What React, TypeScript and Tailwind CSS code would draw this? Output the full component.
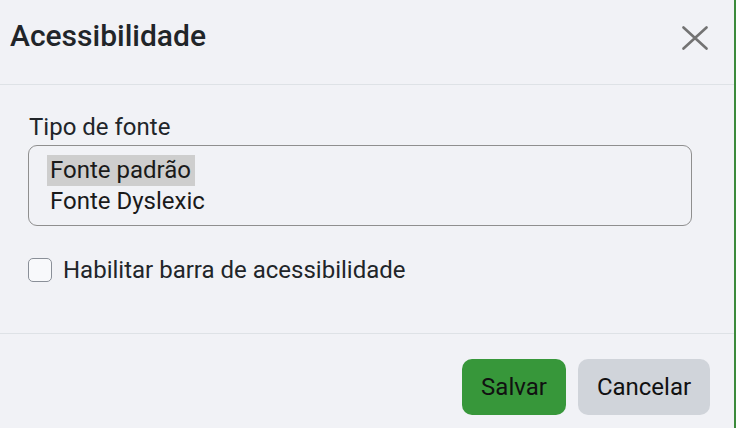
import React from "react";

export default function App() {
  return (
    <div
      className="flex w-[736px] h-[428px] bg-[#f1f2f6] text-[#212529] overflow-hidden"
      style={{ fontFamily: "Roboto, 'Noto Sans', sans-serif" }}
    >
      <div className="flex-1 flex flex-col">
        <div className="h-[85px] border-b border-[#dee2e6] flex items-start justify-between pl-[10px] pr-[26px] pt-[18px]">
          <h1 className="text-[30px] leading-[36px] font-medium text-[#212529]">Acessibilidade</h1>
          <button className="mt-[8px] w-[26px] h-[24px] flex items-center justify-center">
            <svg width="26" height="24" viewBox="0 0 26 24" fill="none">
              <path d="M1.5 1.5L24.5 22.5M24.5 1.5L1.5 22.5" stroke="#737373" strokeWidth="2.6" strokeLinecap="round" />
            </svg>
          </button>
        </div>
        <div className="h-[249px] border-b border-[#dee2e6] pl-[28px] pr-[42px] pt-[28px]">
          <label className="block text-[24px] leading-[28px] pl-[1px]">Tipo de fonte</label>
          <div className="mt-[4px] h-[81px] border border-[#8f8f8f] rounded-[9px] pl-[18px] pt-[9px]">
            <div className="h-[31px] leading-[31px] text-[24px]">
              <span className="inline-block bg-[#cecece] pl-[3px] pr-[4px] text-[#1a1a1a]">Fonte padrão</span>
            </div>
            <div className="h-[30px] leading-[30px] text-[24px] pl-[3px] text-[#1a1a1a]">Fonte Dyslexic</div>
          </div>
          <div className="mt-[30px] flex items-center gap-[11px]">
            <span className="w-[24px] h-[24px] rounded-[5px] border border-[#8a8f98] bg-[#f8f9fb]"></span>
            <span className="text-[24px] leading-[28px]">Habilitar barra de acessibilidade</span>
          </div>
        </div>
        <div className="flex justify-end gap-[12px] pt-[25px] pr-[24px]">
          <button className="w-[104px] h-[56px] rounded-[10px] bg-[#37973a] text-[24px] text-[#111]">Salvar</button>
          <button className="w-[132px] h-[56px] rounded-[10px] bg-[#d0d4da] text-[24px] text-[#111]">Cancelar</button>
        </div>
      </div>
      <div className="w-[2px] bg-[#3b8a3b]"></div>
    </div>
  );
}
